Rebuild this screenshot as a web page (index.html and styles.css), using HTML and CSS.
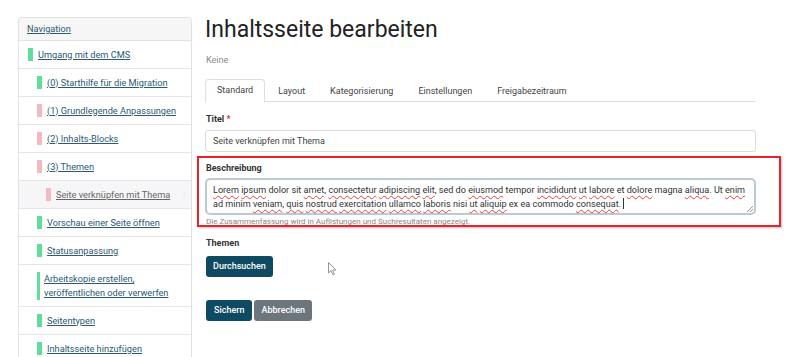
FILE: index.html
```html
<!DOCTYPE html>
<html lang="de">
<head>
<meta charset="utf-8">
<title>Inhaltsseite bearbeiten</title>
<link rel="stylesheet" href="styles.css">
</head>
<body>
<div class="page">
  <nav class="sidebar">
    <div class="nav-head"><a href="#">Navigation</a></div>
    <ul class="nav-list">
      <li class="nav-row lvl1"><span class="bar green"></span><a href="#">Umgang mit dem CMS</a></li>
      <li class="nav-row lvl2"><span class="bar green"></span><a href="#">(0) Starthilfe für die Migration</a></li>
      <li class="nav-row lvl2"><span class="bar pink"></span><a href="#">(1) Grundlegende Anpassungen</a></li>
      <li class="nav-row lvl2"><span class="bar pink"></span><a href="#">(2) Inhalts-Blocks</a></li>
      <li class="nav-row lvl2"><span class="bar pink"></span><a href="#">(3) Themen</a></li>
      <li class="nav-row lvl3 active"><span class="bar pink"></span><a href="#">Seite verknüpfen mit Thema</a><span class="chev">›</span></li>
      <li class="nav-row lvl2"><span class="bar green"></span><a href="#">Vorschau einer Seite öffnen</a></li>
      <li class="nav-row lvl2"><span class="bar green"></span><a href="#">Statusanpassung</a></li>
      <li class="nav-row lvl2 multi"><span class="bar green"></span><a href="#">Arbeitskopie erstellen,<br>veröffentlichen oder verwerfen</a></li>
      <li class="nav-row lvl2"><span class="bar green"></span><a href="#">Seitentypen</a></li>
      <li class="nav-row lvl2"><span class="bar green"></span><a href="#">Inhaltsseite hinzufügen</a></li>
    </ul>
  </nav>

  <main class="main">
    <h1 class="title">Inhaltsseite bearbeiten</h1>
    <div class="subtitle">Keine</div>

    <ul class="tabs">
      <li class="tab active">Standard</li>
      <li class="tab">Layout</li>
      <li class="tab">Kategorisierung</li>
      <li class="tab">Einstellungen</li>
      <li class="tab">Freigabezeitraum</li>
    </ul>

    <div class="field">
      <label class="label">Titel <span class="req">*</span></label>
      <div class="input">Seite verknüpfen mit Thema</div>
    </div>

    <div class="highlight">
      <label class="label">Beschreibung</label>
      <div class="textarea"><span class="sp">Lorem</span> <span class="sp">ipsum</span> dolor sit <span class="sp">amet</span>, <span class="sp">consectetur</span> <span class="sp">adipiscing</span> <span class="sp">elit</span>, sed do <span class="sp">eiusmod</span> tempor <span class="sp">incididunt</span> <span class="sp">ut</span> <span class="sp">labore</span> et <span class="sp">dolore</span> magna <span class="sp">aliqua</span>. Ut <span class="sp">enim</span> ad minim <span class="sp">veniam</span>, <span class="sp">quis</span> <span class="sp">nostrud</span> <span class="sp">exercitation</span> <span class="sp">ullamco</span> <span class="sp">laboris</span> nisi <span class="sp">ut</span> <span class="sp">aliquip</span> ex ea commodo <span class="sp">consequat</span>. <span class="caret"></span><span class="grip"></span></div>
      <div class="help">Die Zusammenfassung wird in Auflistungen und Suchresultaten angezeigt.</div>
    </div>

    <div class="themen">
      <label class="label">Themen</label>
      <button class="btn btn-primary" type="button">Durchsuchen</button>
    </div>

    <div class="actions">
      <button class="btn btn-primary btn-save" type="button">Sichern</button>
      <button class="btn btn-secondary" type="button">Abbrechen</button>
    </div>

    <svg class="pointer" width="9" height="14" viewBox="0 0 9 14" aria-hidden="true">
      <path d="M0.5 0.5 L0.5 11 L3 8.6 L4.8 12.8 L6.3 12.1 L4.6 8.1 L8 8.1 Z" fill="#fff" stroke="#8a8a8a" stroke-width="0.9" stroke-linejoin="round"/>
    </svg>
  </main>
</div>
</body>
</html>
```

FILE: styles.css
```css
* { box-sizing: border-box; }

html, body {
  margin: 0;
  padding: 0;
  background: #fff;
  overflow: hidden;
}

body {
  font-family: Roboto, "Liberation Sans", Arial, sans-serif;
  font-size: 9px;
  color: #333;
  width: 800px;
  height: 357px;
}

.page {
  display: flex;
  align-items: flex-start;
  padding: 17px 0 0 18px;
  gap: 13px;
}

/* Sidebar */
.sidebar {
  width: 174px;
  flex: none;
  border: 1px solid #e1e1e1;
  border-radius: 3px;
  background: #fff;
  font-size: 9.2px;
}

.nav-head {
  height: 23px;
  line-height: 22px;
  padding: 0 8px;
  background: #f6f6f6;
  border-bottom: 1px solid #e3e3e3;
  border-radius: 3px 3px 0 0;
}

.sidebar a {
  color: #2c5a6f;
  text-decoration: underline;
  text-underline-offset: 1px;
  text-decoration-thickness: 1px;
}

.nav-list {
  list-style: none;
  margin: 0;
  padding: 0;
}

.nav-row {
  position: relative;
  display: flex;
  align-items: center;
  gap: 5px;
  height: 28px;
  padding-right: 6px;
  border-bottom: 1px solid #e6e6e6;
  line-height: 14px;
}

.nav-row.multi {
  height: 42px;
  align-items: stretch;
  padding-top: 7px;
  padding-bottom: 6px;
  gap: 4px;
}

.lvl1 { padding-left: 9px; }
.lvl2 { padding-left: 18px; }
.lvl3 { padding-left: 27px; }

.bar {
  flex: none;
  width: 5px;
  height: 13px;
}
.multi .bar {
  width: 3px;
  height: auto;
}
.bar.green { background: #5fdd9b; }
.bar.pink { background: #f4b9c0; }

.nav-row.active {
  background: #f6f6f8;
}
.nav-row.active a {
  color: #666;
}
.chev {
  position: absolute;
  right: 5px;
  top: 6px;
  color: #e8e8e8;
  font-size: 12px;
}

/* Main */
.main {
  position: relative;
  width: 551px;
  flex: none;
  margin-top: -1px;
}

.title {
  margin: 0;
  font-size: 23px;
  line-height: 28px;
  font-weight: 400;
  color: #222;
}

.subtitle {
  margin-top: 9px;
  line-height: 14px;
  font-size: 9px;
  color: #888;
  padding-left: 1px;
}

.tabs {
  list-style: none;
  margin: 13px 0 0;
  padding: 0;
  display: flex;
  border-bottom: 1px solid #dedede;
  height: 22px;
}

.tab {
  height: 22px;
  line-height: 21px;
  padding: 0 11px;
  border: 1px solid transparent;
  border-bottom: none;
  color: #444;
  margin-right: 1px;
}

.tab.active {
  border-color: #dedede;
  border-radius: 4px 4px 0 0;
  background: #fff;
  position: relative;
  height: 23px;
  margin-top: -1px;
}

.field {
  margin-top: 10px;
}

.label {
  display: block;
  font-weight: 700;
  color: #333;
  line-height: 14px;
  padding-left: 1px;
}

.req {
  color: #d9363e;
}

.input {
  margin-top: 4px;
  height: 22px;
  line-height: 20px;
  padding: 0 7px;
  border: 1px solid #dcdcdc;
  border-radius: 3px;
  color: #444;
}

.highlight {
  margin: 4px -25px 0 -8px;
  padding: 3px 23px 0 6px;
  border: 2px solid #e8232b;
  box-shadow: 1px 1px 2px rgba(0, 0, 0, 0.25);
  height: 71px;
}

.textarea {
  position: relative;
  margin-top: 3px;
  height: 37px;
  padding: 3px 2px 0 6px;
  border: 2px solid #bccbd3;
  border-radius: 5px;
  box-shadow: inset 0 0 1px rgba(0, 0, 0, 0.15);
  line-height: 14px;
  font-size: 9.1px;
  color: #333;
}

.sp {
  text-decoration: underline wavy #e2403f;
  text-decoration-thickness: 1px;
  text-underline-offset: 2px;
  text-decoration-skip-ink: none;
}

.caret {
  display: inline-block;
  width: 1px;
  height: 11px;
  background: #333;
  vertical-align: -2px;
}

.grip {
  position: absolute;
  right: 1px;
  bottom: 1px;
  width: 6px;
  height: 6px;
  background: linear-gradient(135deg, transparent 45%, #999 45%, #999 55%, transparent 55%, transparent 70%, #999 70%, #999 80%, transparent 80%);
}

.help {
  margin-top: 2px;
  font-size: 8px;
  line-height: 9px;
  color: #888;
  padding-left: 1px;
}

.themen {
  margin-top: 9px;
}

.themen .btn {
  margin-top: 6px;
}

.btn {
  display: inline-block;
  height: 21px;
  padding: 0 7px;
  border: none;
  border-radius: 3px;
  font-family: Roboto, "Liberation Sans", Arial, sans-serif;
  font-size: 9px;
  font-weight: 500;
  color: #fff;
  line-height: 21px;
  cursor: pointer;
  margin-left: 1px;
}

.btn-save { padding: 0 8px; }

.btn-primary { background: #0e4a62; }
.btn-secondary { background: #6d757d; margin-left: 0; }

.actions {
  margin-top: 23px;
  display: flex;
  gap: 2px;
}

.pointer {
  position: absolute;
  left: 123px;
  top: 246px;
}
```
